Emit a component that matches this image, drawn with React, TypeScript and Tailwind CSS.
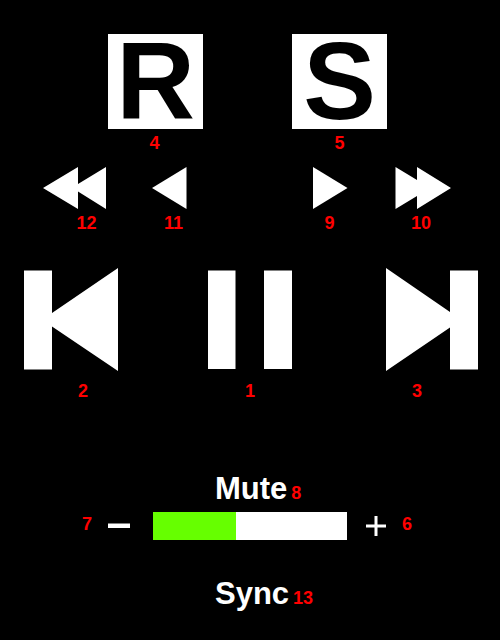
import { useState, type ReactNode } from "react";

const LABEL = "text-[18px] leading-5 font-bold text-[#ff0000]";

type ControlProps = {
  name: string;
  label: string;
  labelClass?: string;
  children: ReactNode;
};

function Control({ name, label, labelClass = "mt-1", children }: ControlProps) {
  return (
    <div className="flex flex-col">
      <button type="button" aria-label={name} className="block cursor-pointer">
        {children}
      </button>
      <span className={`text-center ${LABEL} ${labelClass}`}>{label}</span>
    </div>
  );
}

function LetterTile({ letter }: { letter: string }) {
  return (
    <span className="block size-[95px] bg-white text-center text-[109px] leading-[95px] font-bold text-black">
      {letter}
    </span>
  );
}

type ShapeProps = { width: number; height: number; d: string };

function Shape({ width, height, d }: ShapeProps) {
  return (
    <svg width={width} height={height} viewBox={`0 0 ${width} ${height}`} fill="#fff" aria-hidden="true" className="block">
      <path d={d} />
    </svg>
  );
}

export default function App() {
  const [volume, setVolume] = useState(43);

  return (
    <main className="min-h-screen w-full bg-black pt-[34px] pb-7 font-['Liberation_Sans',Arial,Helvetica,sans-serif] text-white">
      <section className="flex justify-between pr-[113px] pl-[108px]">
        <Control name="Repeat" label="4" labelClass="mt-1 pr-0.5">
          <LetterTile letter="R" />
        </Control>
        <Control name="Shuffle" label="5">
          <LetterTile letter="S" />
        </Control>
      </section>

      <section className="mt-[14px] flex justify-between pr-[49px] pl-[43px]">
        <div className="flex gap-[46px]">
          <Control name="Fast rewind" label="12" labelClass="mt-1 pl-6">
            <Shape width={63} height={42} d="M0 21 35 0V17L63 0V42L35 24.5V42Z" />
          </Control>
          <Control name="Rewind" label="11" labelClass="mt-1 pl-2">
            <Shape width={35} height={42} d="M0 21 34.5 0V42Z" />
          </Control>
        </div>
        <div className="flex gap-[47px]">
          <Control name="Forward" label="9" labelClass="mt-1 pr-0.5">
            <Shape width={35} height={42} d="M0 0 34.5 21 0 42Z" />
          </Control>
          <Control name="Fast forward" label="10" labelClass="mt-1 pr-1">
            <Shape width={56} height={42} d="M.5 0 22 13V0L56 21 22 42V29L.5 42Z" />
          </Control>
        </div>
      </section>

      <section className="mt-[35px] flex justify-between pr-[22px] pl-6">
        <Control name="Previous track" label="2" labelClass="mt-[10px] pl-6">
          <Shape width={94} height={103} d="M0 2.5H28V45L94 0V103L28 58.5V101.5H0Z" />
        </Control>
        <Control name="Pause" label="1" labelClass="mt-[10px] pr-1">
          <Shape width={88} height={103} d="M0 2.5H27.5V101H0ZM56 2.5H84V101H56Z" />
        </Control>
        <Control name="Next track" label="3" labelClass="mt-[10px] pr-[30px]">
          <Shape width={92} height={103} d="M0 0 64 44V2.5H92V101.5H64V59.5L0 103Z" />
        </Control>
      </section>

      <section className="mt-[72px] flex items-baseline gap-1 pl-[215px]">
        <button type="button" className="cursor-pointer text-[31px] leading-8 font-bold">
          Mute
        </button>
        <span className={LABEL}>8</span>
      </section>

      <section className="mt-[7px] flex items-center pr-[88px] pl-[82px]">
        <span className={`pb-1 ${LABEL}`}>7</span>
        <button
          type="button"
          aria-label="Volume down"
          className="ml-4 cursor-pointer"
          onClick={() => setVolume((v) => Math.max(0, v - 5))}
        >
          <Shape width={22} height={28} d="M0 11.5H22V16H0Z" />
        </button>
        <input
          type="range"
          aria-label="Volume"
          min={0}
          max={100}
          value={volume}
          onChange={(e) => setVolume(Number(e.target.value))}
          className="mr-[19px] ml-[23px] h-7 min-w-0 flex-1 cursor-pointer appearance-none [&::-webkit-slider-thumb]:opacity-0"
          style={{ background: `linear-gradient(to right, #66ff00 ${volume}%, #ffffff ${volume}%)` }}
        />
        <button
          type="button"
          aria-label="Volume up"
          className="mr-4 cursor-pointer"
          onClick={() => setVolume((v) => Math.min(100, v + 5))}
        >
          <Shape width={20} height={28} d="M8.5 4H11.5V12.5H20V15.5H11.5V24H8.5V15.5H0V12.5H8.5Z" />
        </button>
        <span className={`pb-1 ${LABEL}`}>6</span>
      </section>

      <section className="mt-[38px] flex items-baseline gap-1 pl-[215px]">
        <button type="button" className="cursor-pointer text-[31px] leading-8 font-bold">
          Sync
        </button>
        <span className={LABEL}>13</span>
      </section>
    </main>
  );
}
